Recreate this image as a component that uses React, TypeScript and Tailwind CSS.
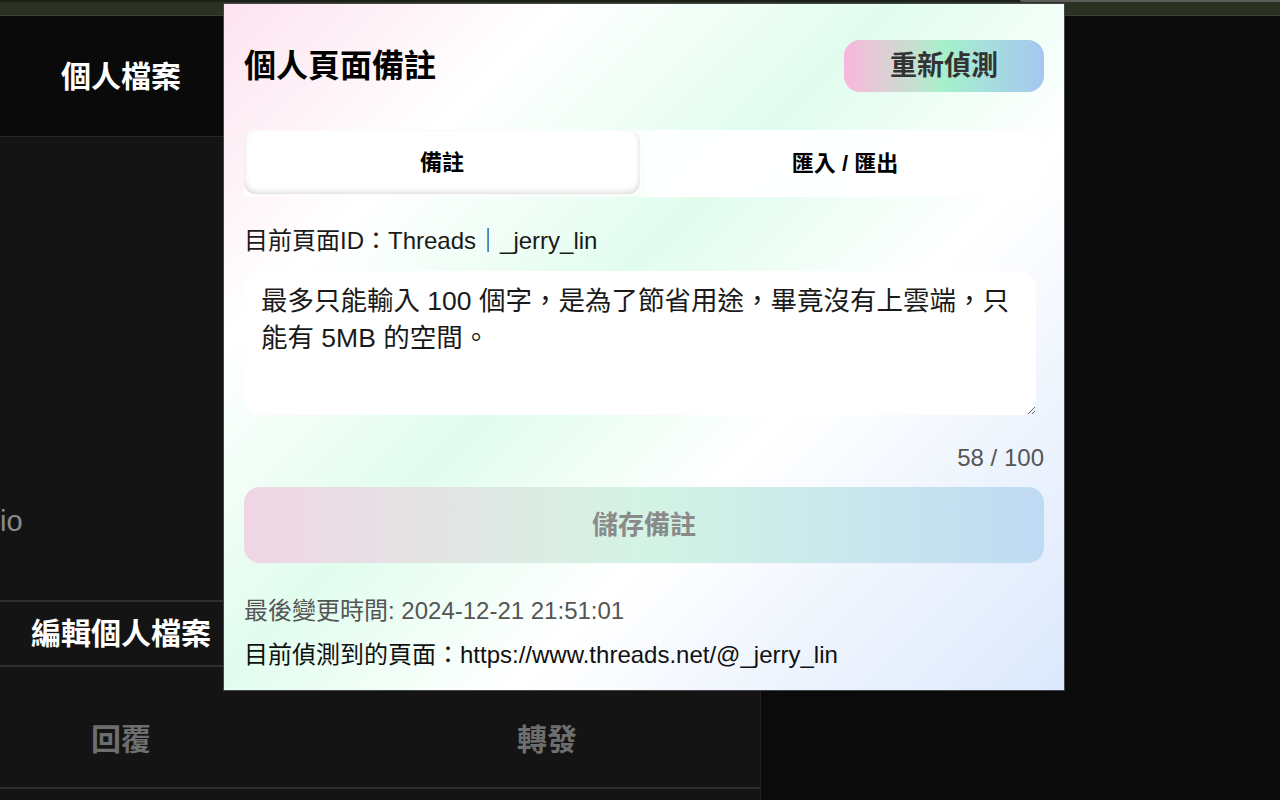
import React from "react";

const FONT = '"Liberation Sans", "Noto Sans CJK TC", sans-serif';

export default function App() {
  return (
    <div
      className="relative w-[1280px] h-[800px] overflow-hidden bg-[#0b0b0b] text-black"
      style={{ fontFamily: FONT }}
    >
      {/* top browser strip */}
      <div className="relative h-[16px] bg-[#2a3223] border-b border-[#3f3f3f]">
        <div className="absolute left-0 top-0 w-full h-[2px] bg-[#1c2219]" />
        <div className="absolute left-[1020px] top-0 w-[260px] h-[2px] rounded-bl-md bg-[#5b5d58]" />
      </div>

      <div className="flex h-[784px]">
        {/* left Threads panel */}
        <div className="w-[761px] h-full bg-[#141414] border-r border-[#1f1f1f] flex flex-col">
          <div className="h-[121px] bg-[#0a0a0a] border-b border-[#262626] flex items-center">
            <div className="w-[242px] text-center text-white text-[30px] font-bold">個人檔案</div>
          </div>
          <div className="h-[463px] relative">
            <div className="absolute left-0 top-[365px] text-[29px] text-[#8a8a8a] leading-[38px]">io</div>
          </div>
          <div className="h-[67px] border-y-2 border-[#2e2e2e] flex items-center">
            <div className="w-[242px] text-center text-white text-[30px] font-bold">編輯個人檔案</div>
          </div>
          <div className="h-[122px] border-b-2 border-[#2e2e2e] flex items-start pt-[53px]">
            <div className="w-[242px] text-center text-[#6e6e6e] text-[30px] leading-[40px] font-bold">回覆</div>
            <div className="flex-1 pl-[92px] text-center text-[#6e6e6e] text-[30px] leading-[40px] font-bold">轉發</div>
          </div>
        </div>
        <div className="flex-1" />
      </div>

      {/* extension popup */}
      <div
        className="absolute left-[223px] top-[3px] w-[842px] border border-[#474747] px-[20px] pt-[36px] pb-[19px]"
        style={{
          background:
            "linear-gradient(135deg, #fde3ef 0%, #ffffff 22%, #e1fdee 44%, #ffffff 64%, #dbe8fc 100%)",
        }}
      >
        <div className="flex items-center justify-between h-[52px]">
          <h1 className="text-[32px] font-bold leading-none text-black">個人頁面備註</h1>
          <button className="w-[200px] h-[52px] rounded-[16px] bg-gradient-to-r from-[#f9b5db] via-[#a5f0cb] to-[#a6c6f0] text-[27px] font-bold text-[#333]">
            重新偵測
          </button>
        </div>

        <div className="mt-[38px] h-[67px] flex gap-[6px] bg-white/70 rounded-t-[12px]">
          <div className="w-[396px] h-[64px] rounded-[12px] bg-white flex items-center justify-center text-[22px] font-bold shadow-[inset_0_-5px_7px_-3px_rgba(0,0,0,0.13),inset_4px_0_6px_-4px_rgba(0,0,0,0.1),inset_-4px_0_6px_-4px_rgba(0,0,0,0.1)]">
            備註
          </div>
          <div className="flex-1 h-[67px] rounded-t-[12px] bg-white/90 flex items-center justify-center text-[22px] font-bold">
            匯入 / 匯出
          </div>
        </div>

        <div className="mt-[28px] text-[24px] leading-[32px] text-[#1a1a1a]">目前頁面ID：Threads｜_jerry_lin</div>

        <textarea
          className="mt-[14px] block w-[792px] h-[144px] rounded-[16px] bg-white pl-[17px] pr-[20px] pt-[12px] text-[26.5px] leading-[37px] text-[#1a1a1a] outline-none"
          style={{ fontFamily: FONT }}
          defaultValue="最多只能輸入 100 個字，是為了節省用途，畢竟沒有上雲端，只能有 5MB 的空間。"
        />

        <div className="mt-[27px] text-right text-[24px] leading-[32px] text-[#555]">58 / 100</div>

        <button className="mt-[13px] w-full h-[76px] rounded-[16px] bg-gradient-to-r from-[#f0d5e4] via-[#d3f4e4] to-[#bfdaf4] text-[26px] font-bold text-[#8a8a8a]">
          儲存備註
        </button>

        <div className="mt-[32px] text-[24px] leading-[32px] text-[#555]">最後變更時間: 2024-12-21 21:51:01</div>
        <div className="mt-[12px] text-[24px] leading-[32px] text-[#111]">目前偵測到的頁面：https://www.threads.net/@_jerry_lin</div>
      </div>
    </div>
  );
}
